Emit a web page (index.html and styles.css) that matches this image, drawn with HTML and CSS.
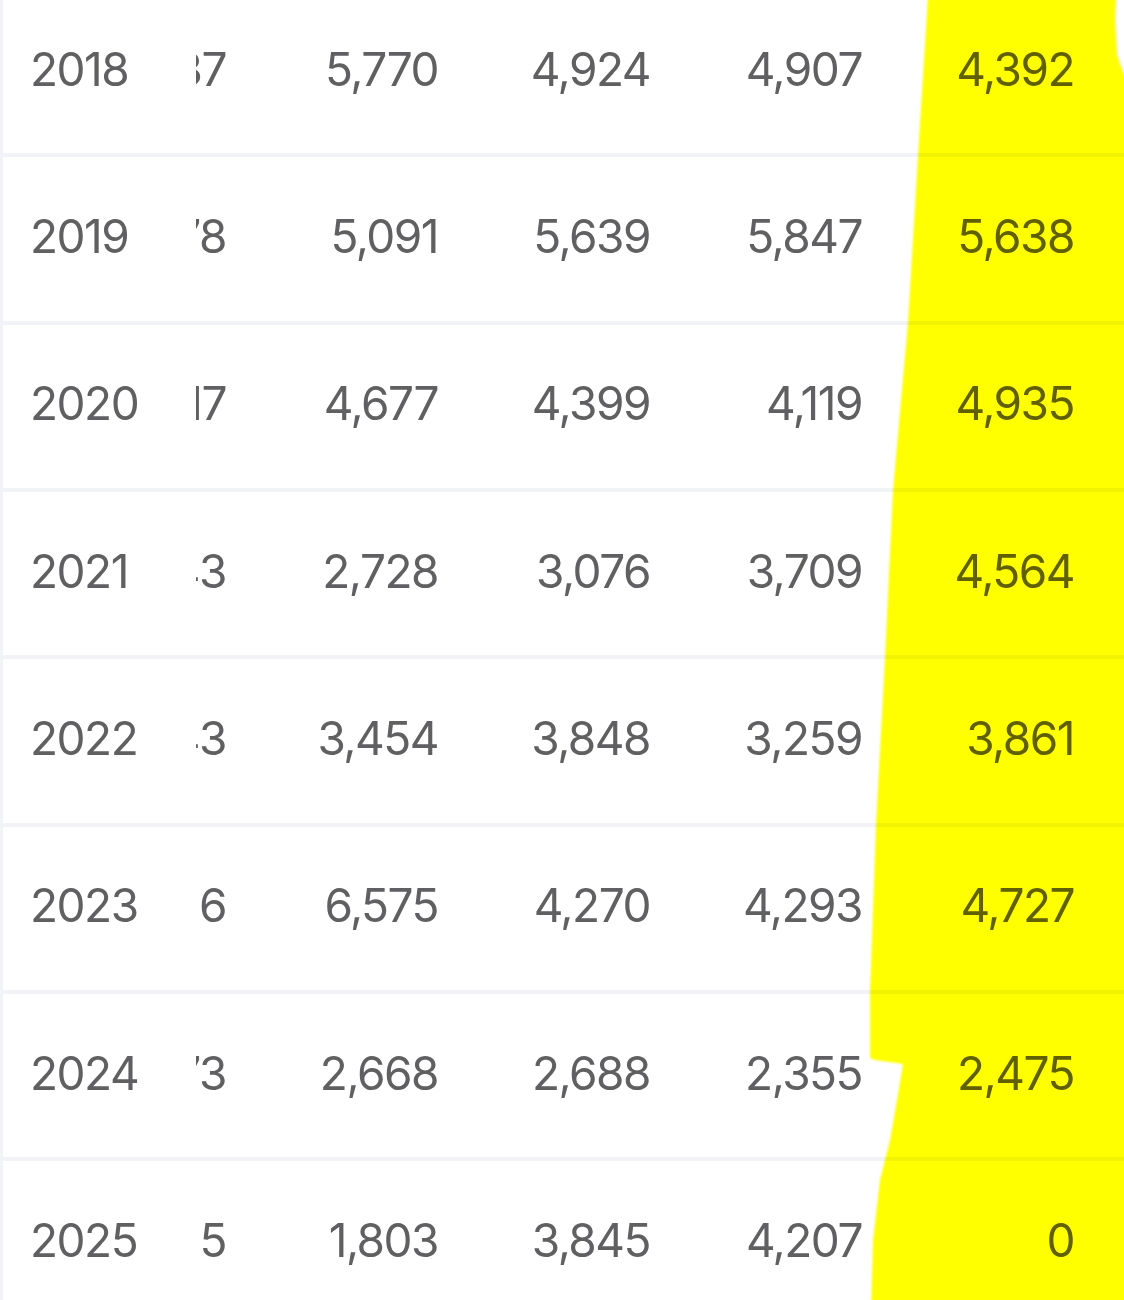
FILE: index.html
```html
<!DOCTYPE html>
<html lang="en">
<head>
<meta charset="utf-8">
<title>Yearly table</title>
<link rel="stylesheet" href="styles.css">
</head>
<body>
<div class="sheet">
  <div class="table">
    <div class="row"><div class="year">2018</div><div class="cell clip">3,837</div><div class="cell">5,770</div><div class="cell">4,924</div><div class="cell">4,907</div><div class="cell">4,392</div></div>
    <div class="row"><div class="year">2019</div><div class="cell clip">3,778</div><div class="cell">5,091</div><div class="cell">5,639</div><div class="cell">5,847</div><div class="cell">5,638</div></div>
    <div class="row"><div class="year">2020</div><div class="cell clip">4,417</div><div class="cell">4,677</div><div class="cell">4,399</div><div class="cell">4,119</div><div class="cell">4,935</div></div>
    <div class="row"><div class="year">2021</div><div class="cell clip">2,943</div><div class="cell">2,728</div><div class="cell">3,076</div><div class="cell">3,709</div><div class="cell">4,564</div></div>
    <div class="row"><div class="year">2022</div><div class="cell clip">3,543</div><div class="cell">3,454</div><div class="cell">3,848</div><div class="cell">3,259</div><div class="cell">3,861</div></div>
    <div class="row"><div class="year">2023</div><div class="cell clip">6</div><div class="cell">6,575</div><div class="cell">4,270</div><div class="cell">4,293</div><div class="cell">4,727</div></div>
    <div class="row"><div class="year">2024</div><div class="cell clip">2,773</div><div class="cell">2,668</div><div class="cell">2,688</div><div class="cell">2,355</div><div class="cell">2,475</div></div>
    <div class="row"><div class="year">2025</div><div class="cell clip">5</div><div class="cell">1,803</div><div class="cell">3,845</div><div class="cell">4,207</div><div class="cell">0</div></div>
  </div>
  <svg class="marker" width="1124" height="1300" viewBox="0 0 1124 1300" aria-hidden="true">
    <defs>
      <filter id="soft" x="-5%" y="-5%" width="110%" height="110%"><feGaussianBlur stdDeviation="1.2"/></filter>
    </defs>
    <path filter="url(#soft)" fill="#ffff00" d="M928 -5 L1116 -5 L1115 20 L1117 55 L1124 75 L1130 75 L1130 1310 L871 1310 L873 1240 L880 1180 L890 1140 L897 1100 L903 1064 L875 1060 L870 1058 L870 992 L876 824 L885 657 L893 490 L908 322 L918 155 Z"/>
  </svg>
</div>
</body>
</html>
```
FILE: styles.css
```css
html, body {
  margin: 0;
  padding: 0;
  background: #ffffff;
}

body {
  width: 1124px;
  height: 1300px;
  overflow: hidden;
}

.sheet {
  position: relative;
  width: 1124px;
  height: 1300px;
  overflow: hidden;
}

.table {
  margin-top: -10px;
  font-family: "Inter", "Liberation Sans", sans-serif;
  font-size: 46px;
  color: #606062;
  letter-spacing: -1.5px;
}

.row {
  display: grid;
  grid-template-columns: 193px 54px 212px 212px 212px 212px 29px;
  align-items: center;
  height: 163.33px;
  border-bottom: 4px solid #f2f3f6;
  border-left: 3px solid #f2f3f6;
  box-sizing: content-box;
}

.year {
  padding-left: 27px;
  padding-bottom: 6px;
  background: #ffffff;
}

.cell {
  display: flex;
  justify-content: flex-end;
  padding-right: 24px;
  padding-bottom: 6px;
  white-space: nowrap;
}

.clip {
  overflow: hidden;
}

.marker {
  position: absolute;
  left: 0;
  top: 0;
  mix-blend-mode: multiply;
  pointer-events: none;
}
```
